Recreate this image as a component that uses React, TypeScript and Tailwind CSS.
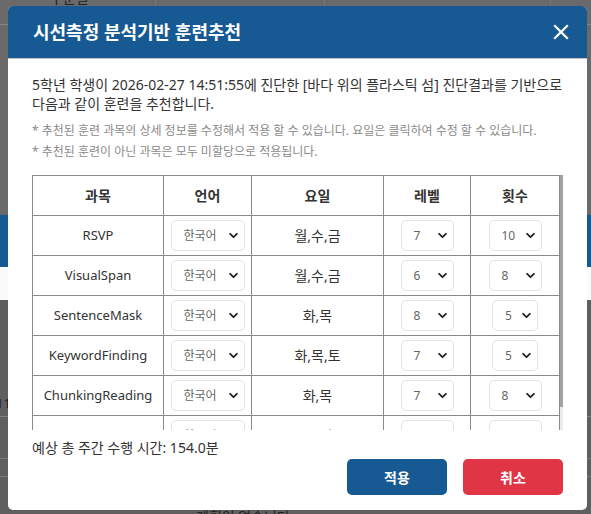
import React from "react";

const rows = [
  { name: "RSVP", days: "월,수,금", level: "7", count: "10" },
  { name: "VisualSpan", days: "월,수,금", level: "6", count: "8" },
  { name: "SentenceMask", days: "화,목", level: "8", count: "5" },
  { name: "KeywordFinding", days: "화,목,토", level: "7", count: "5" },
  { name: "ChunkingReading", days: "화,목", level: "7", count: "8" },
  { name: "WordTracking", days: "토,일", level: "5", count: "6" },
];

const Chevron = () => (
  <svg width="9" height="9" viewBox="0 0 16 16" fill="none">
    <path d="M2 5l6 6 6-6" stroke="#222" strokeWidth="3.2" strokeLinecap="round" strokeLinejoin="round" />
  </svg>
);

const FakeSelect = ({ value, width }: { value: string; width: string }) => (
  <div
    className={`mx-auto flex h-[31px] items-center justify-between rounded-[5px] border border-[#e2e2e2] bg-white pl-[12px] pr-[6px] text-[12px] text-[#666] ${width}`}
  >
    <span>{value}</span>
    <Chevron />
  </div>
);

export default function App() {
  return (
    <div
      className="relative h-[514px] w-[591px] overflow-hidden bg-[#6a6a6a]"
      style={{ fontFamily: '"Noto Sans", "Noto Sans CJK KR", sans-serif' }}
    >
      {/* page behind the dimmed overlay */}
      <div className="flex flex-col">
        <div className="flex h-[25px] border-b border-[#858585]">
          <div className="w-[156px] border-r border-[#777]">
            <span className="-mt-[13px] ml-[50px] block text-[14px] text-[#222]">구분일</span>
          </div>
          <div className="w-[169px] border-r border-[#777]" />
          <div className="w-[226px] border-r border-[#777]" />
        </div>
        <div className="h-[190px] border-b border-[#666]" />
        <div className="h-[52px] bg-[#175a93]" />
        <div className="h-[33px] bg-[#fafafa]" />
        <div className="h-[117px] border-b border-[#808080] bg-[#5f5f5f]">
          <span className="-ml-[4px] block pt-[95px] text-[13px] leading-[16px] text-[#222]">11</span>
        </div>
        <div className="h-[42px] border-b border-[#7a7a7a] bg-[#5f5f5f]" />
        <div className="h-[18px] border-b border-[#7a7a7a] bg-[#5f5f5f]" />
        <div className="h-[40px] bg-[#5f5f5f]">
          <span className="ml-[196px] block pt-[31px] text-[14px] leading-[18px] text-[#222]">계획이 없습니다</span>
        </div>
      </div>

      {/* modal */}
      <div className="absolute left-[8px] top-[6px] flex h-[504px] w-[579px] flex-col overflow-hidden rounded-[5px] bg-white">
        <div className="flex h-[53px] shrink-0 items-center justify-between border-b border-[#c4c4c4] bg-[#175a93] pl-[25px] pr-[18px]">
          <h2 className="text-[18px] font-bold text-white">시선측정 분석기반 훈련추천</h2>
          <svg width="16" height="16" viewBox="0 0 16 16" fill="none">
            <path d="M2 2l12 12M14 2L2 14" stroke="white" strokeWidth="2.2" strokeLinecap="square" />
          </svg>
        </div>

        <div className="flex flex-1 flex-col px-[24px] pb-[15px] pt-[16px]">
          <p className="whitespace-nowrap text-[14px] leading-[19px] text-[#333]">
            5학년 학생이 2026-02-27 14:51:55에 진단한 [바다 위의 플라스틱 섬] 진단결과를 기반으로
            <br />
            다음과 같이 훈련을 추천합니다.
          </p>
          <div className="mt-[7px] whitespace-nowrap text-[12px] leading-[21px] text-[#8a8a8a]">
            <p>* 추천된 훈련 과목의 상세 정보를 수정해서 적용 할 수 있습니다. 요일은 클릭하여 수정 할 수 있습니다.</p>
            <p>* 추천된 훈련이 아닌 과목은 모두 미할당으로 적용됩니다.</p>
          </div>

          <div className="mt-[13px] flex h-[255px] shrink-0 overflow-hidden">
            <table className="w-[527px] table-fixed border-collapse text-center text-[13px] text-[#333]">
              <colgroup>
                <col className="w-[131px]" />
                <col className="w-[88px]" />
                <col className="w-[132px]" />
                <col className="w-[87px]" />
                <col className="w-[89px]" />
              </colgroup>
              <thead>
                <tr className="h-[40px]">
                  {["과목", "언어", "요일", "레벨", "횟수"].map((h) => (
                    <th key={h} className="border border-[#8a8a8a] text-[14px] font-bold text-[#333]">
                      {h}
                    </th>
                  ))}
                </tr>
              </thead>
              <tbody>
                {rows.map((r) => (
                  <tr key={r.name} className="h-[40px]">
                    <td className="border border-[#8a8a8a]">{r.name}</td>
                    <td className="border border-[#8a8a8a]">
                      <FakeSelect value="한국어" width="w-[74px]" />
                    </td>
                    <td className="border border-[#8a8a8a] text-[14px]">{r.days}</td>
                    <td className="border border-[#8a8a8a]">
                      <FakeSelect value={r.level} width="w-[53px]" />
                    </td>
                    <td className="border border-[#8a8a8a]">
                      <FakeSelect value={r.count} width={r.count === "5" ? "w-[46px]" : "w-[53px]"} />
                    </td>
                  </tr>
                ))}
              </tbody>
            </table>
            <div className="flex w-[6px] flex-col bg-[#ececec]">
              <div className="h-[232px] bg-[#a3a3a3]" />
            </div>
          </div>

          <p className="mt-[8px] text-[14px] leading-[20px] text-[#333]">예상 총 주간 수행 시간: 154.0분</p>

          <div className="mt-auto flex justify-end gap-[16px]">
            <button className="h-[36px] w-[100px] rounded-[5px] bg-[#175a93] text-[14px] font-bold text-white">
              적용
            </button>
            <button className="h-[36px] w-[100px] rounded-[5px] bg-[#df3545] text-[14px] font-bold text-white">
              취소
            </button>
          </div>
        </div>
      </div>
    </div>
  );
}
